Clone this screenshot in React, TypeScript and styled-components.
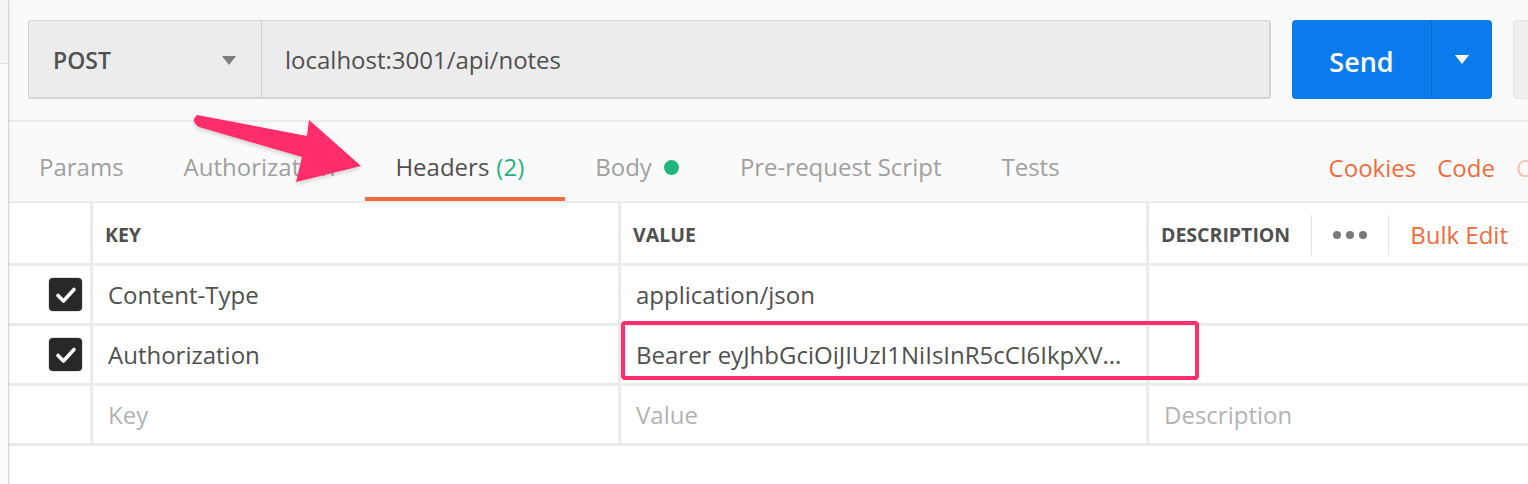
import React from 'react';
import styled, { createGlobalStyle } from 'styled-components';

const GlobalStyle = createGlobalStyle`
  html, body { margin: 0; padding: 0; background: #fafafa; }
  body {
    font-family: "Open Sans", "Liberation Sans", sans-serif;
    color: #505050;
    -webkit-font-smoothing: antialiased;
  }
  * { box-sizing: border-box; }
`;

const Page = styled.div`
  position: relative;
  width: 1528px;
  height: 484px;
  overflow: hidden;
  display: flex;
`;

const SideStrip = styled.div`
  width: 9px;
  flex: none;
  display: flex;
  flex-direction: column;
  border-right: 1px solid #d6d6d6;
  box-shadow: 1px 0 3px rgba(0, 0, 0, 0.07);
  z-index: 1;
`;

const SideTop = styled.div`
  height: 64px;
  background: #f5f5f5;
  border-bottom: 1px solid #e3e3e3;
`;

const SideRest = styled.div`
  flex: 1;
  background: #fcfcfc;
`;

const Main = styled.div`
  flex: 1;
  min-width: 0;
  display: flex;
  flex-direction: column;
  background: #fafafa;
`;

const TopBar = styled.div`
  height: 122px;
  flex: none;
  padding: 20px 0 0 19px;
  display: flex;
  align-items: flex-start;
  gap: 21px;
  border-bottom: 2px solid #ebebeb;
`;

const UrlGroup = styled.div`
  width: 1243px;
  height: 79px;
  flex: none;
  display: flex;
  background: #ececec;
  border: 1px solid #d4d4d4;
  border-right-width: 2px;
  border-bottom-width: 2px;
  border-radius: 3px;
`;

const MethodSelect = styled.div`
  width: 233px;
  flex: none;
  display: flex;
  align-items: center;
  justify-content: space-between;
  padding: 2px 25px 0 24px;
  border-right: 1px solid #d2d2d2;
  font-size: 23px;
  font-weight: 600;
  color: #505050;
`;

const Caret = styled.span<{ $color: string }>`
  width: 0;
  height: 0;
  border-left: 7px solid transparent;
  border-right: 7px solid transparent;
  border-top: 9px solid ${(p) => p.$color};
`;

const UrlInput = styled.div`
  flex: 1;
  display: flex;
  align-items: center;
  padding-left: 23px;
  font-size: 24px;
  color: #505050;
`;

const SendGroup = styled.div`
  width: 200px;
  height: 79px;
  flex: none;
  display: flex;
  background: #097bed;
  border-radius: 4px;
  color: #fff;
`;

const SendMain = styled.div`
  width: 139px;
  display: flex;
  align-items: center;
  justify-content: center;
  padding-top: 3px;
  font-size: 27px;
  font-weight: 600;
`;

const SendMore = styled.div`
  flex: 1;
  display: flex;
  align-items: center;
  justify-content: center;
  border-left: 1px solid #0a6cd2;
`;

const GhostButton = styled.div`
  width: 120px;
  height: 79px;
  flex: none;
  background: #efefef;
  border: 1px solid #e4e4e4;
  border-radius: 4px;
`;

const TabsBar = styled.div`
  height: 81px;
  flex: none;
  display: flex;
  align-items: stretch;
  border-bottom: 2px solid #ebebeb;
  overflow: hidden;
`;

const Tab = styled.div<{ $active?: boolean }>`
  display: flex;
  align-items: center;
  flex: none;
  padding: 13px 30px 0;
  border-bottom: 4px solid ${(p) => (p.$active ? '#f26b3a' : 'transparent')};
  font-size: 24px;
  color: ${(p) => (p.$active ? '#505050' : '#a0a0a0')};
  white-space: nowrap;
`;

const Count = styled.span`
  color: #26b47f;
  margin-left: 7px;
  margin-right: 11px;
`;

const Dot = styled.span`
  width: 15px;
  height: 15px;
  border-radius: 50%;
  background: #20b57f;
  margin-left: 12px;
  margin-right: 1px;
  margin-top: 3px;
`;

const Links = styled.div`
  display: flex;
  align-items: center;
  gap: 21px;
  flex: none;
  margin-left: 239px;
  padding-top: 12px;
`;

const LinkText = styled.span<{ $faded?: boolean }>`
  font-size: 24px;
  color: #f26b3a;
  opacity: ${(p) => (p.$faded ? 0.4 : 1)};
  white-space: nowrap;
`;

const TableWrap = styled.div`
  position: relative;
  flex: 1;
  background: #fff;
`;

const Row = styled.div<{ $header?: boolean }>`
  display: grid;
  grid-template-columns: 81px 525px 525px 1fr;
  column-gap: 3px;
  height: ${(p) => (p.$header ? '63px' : '60px')};
  background: #ebebeb;
  border-bottom: 3px solid #ebebeb;
`;

const Cell = styled.div<{ $header?: boolean; $placeholder?: boolean }>`
  display: flex;
  align-items: center;
  background: #fff;
  padding-left: ${(p) => (p.$header ? '12px' : '15px')};
  padding-top: ${(p) => (p.$header ? '3px' : '0')};
  font-size: ${(p) => (p.$header ? '19.5px' : '24px')};
  font-weight: ${(p) => (p.$header ? 700 : 400)};
  text-transform: ${(p) => (p.$header ? 'uppercase' : 'none')};
  color: ${(p) => (p.$placeholder ? '#b3b3b3' : '#505050')};
  white-space: nowrap;
  overflow: hidden;
  min-width: 0;
`;

const CheckCell = styled.div`
  display: flex;
  align-items: center;
  justify-content: flex-end;
  padding-right: 8px;
  background: #fff;
`;

const CheckBox = styled.span`
  width: 33px;
  height: 33px;
  border-radius: 4px;
  background: #282828;
  box-shadow: 0 0 0 1px #e2e2e2;
  display: flex;
  align-items: center;
  justify-content: center;
`;

const HeaderTools = styled.div`
  display: flex;
  align-items: center;
  gap: 21px;
  height: 100%;
`;

const ToolSep = styled.span`
  width: 1px;
  height: 40px;
  background: #e2e2e2;
`;

const Dots = styled.span`
  display: flex;
  gap: 5px;
`;

const DotItem = styled.span`
  width: 8px;
  height: 8px;
  border-radius: 50%;
  background: #7a7a7a;
`;

const BulkEdit = styled.span`
  font-size: 24px;
  font-weight: 400;
  text-transform: none;
  color: #f26b3a;
`;

const Highlight = styled.div`
  position: absolute;
  left: 612px;
  top: 118px;
  width: 578px;
  height: 59px;
  border: 4px solid #ff2e6e;
  border-radius: 4px;
  pointer-events: none;
`;

const ArrowLayer = styled.svg`
  position: absolute;
  left: 0;
  top: 0;
  pointer-events: none;
  z-index: 5;
`;

const Check = () => (
  <svg width="22" height="18" viewBox="0 0 22 18">
    <path d="M3 9.5 L8.5 15 L19 3.5" fill="none" stroke="#fff" strokeWidth="3.6" strokeLinecap="round" strokeLinejoin="round" />
  </svg>
);

const rows = [
  { key: 'Content-Type', value: 'application/json', checked: true },
  { key: 'Authorization', value: 'Bearer eyJhbGciOiJIUzI1NiIsInR5cCI6IkpXV...', checked: true },
];

export default function App() {
  return (
    <>
      <GlobalStyle />
      <Page>
        <SideStrip>
          <SideTop />
          <SideRest />
        </SideStrip>
        <Main>
          <TopBar>
            <UrlGroup>
              <MethodSelect>
                POST
                <Caret $color="#7d7d7d" />
              </MethodSelect>
              <UrlInput>localhost:3001/api/notes</UrlInput>
            </UrlGroup>
            <SendGroup>
              <SendMain>Send</SendMain>
              <SendMore>
                <Caret $color="#ffffff" />
              </SendMore>
            </SendGroup>
            <GhostButton />
          </TopBar>
          <TabsBar>
            <Tab>Params</Tab>
            <Tab>Authorization</Tab>
            <Tab $active>
              Headers<Count>(2)</Count>
            </Tab>
            <Tab>
              Body<Dot />
            </Tab>
            <Tab>Pre-request Script</Tab>
            <Tab>Tests</Tab>
            <Links>
              <LinkText>Cookies</LinkText>
              <LinkText>Code</LinkText>
              <LinkText $faded>Comments (0)</LinkText>
            </Links>
          </TabsBar>
          <TableWrap>
            <Row $header>
              <CheckCell />
              <Cell $header>Key</Cell>
              <Cell $header>Value</Cell>
              <Cell $header>
                <HeaderTools>
                  Description
                  <ToolSep />
                  <Dots>
                    <DotItem />
                    <DotItem />
                    <DotItem />
                  </Dots>
                  <ToolSep />
                  <BulkEdit>Bulk Edit</BulkEdit>
                  <ToolSep />
                </HeaderTools>
              </Cell>
            </Row>
            {rows.map((r) => (
              <Row key={r.key}>
                <CheckCell>
                  {r.checked && (
                    <CheckBox>
                      <Check />
                    </CheckBox>
                  )}
                </CheckCell>
                <Cell>{r.key}</Cell>
                <Cell>{r.value}</Cell>
                <Cell />
              </Row>
            ))}
            <Row>
              <CheckCell />
              <Cell $placeholder>Key</Cell>
              <Cell $placeholder>Value</Cell>
              <Cell $placeholder>Description</Cell>
            </Row>
            <Highlight />
          </TableWrap>
        </Main>
        <ArrowLayer width="1528" height="484" viewBox="0 0 1528 484">
          <defs>
            <filter id="arrowShadow" x="-10%" y="-10%" width="130%" height="140%">
              <feDropShadow dx="0" dy="2" stdDeviation="2" floodColor="#000" floodOpacity="0.18" />
            </filter>
          </defs>
          <path
            d="M197 115 L307 136 L309 120 L361 166 L296 182 L302 157 L199 127 Q190 121 197 115 Z"
            fill="#ff2d6b"
            filter="url(#arrowShadow)"
          />
        </ArrowLayer>
      </Page>
    </>
  );
}
